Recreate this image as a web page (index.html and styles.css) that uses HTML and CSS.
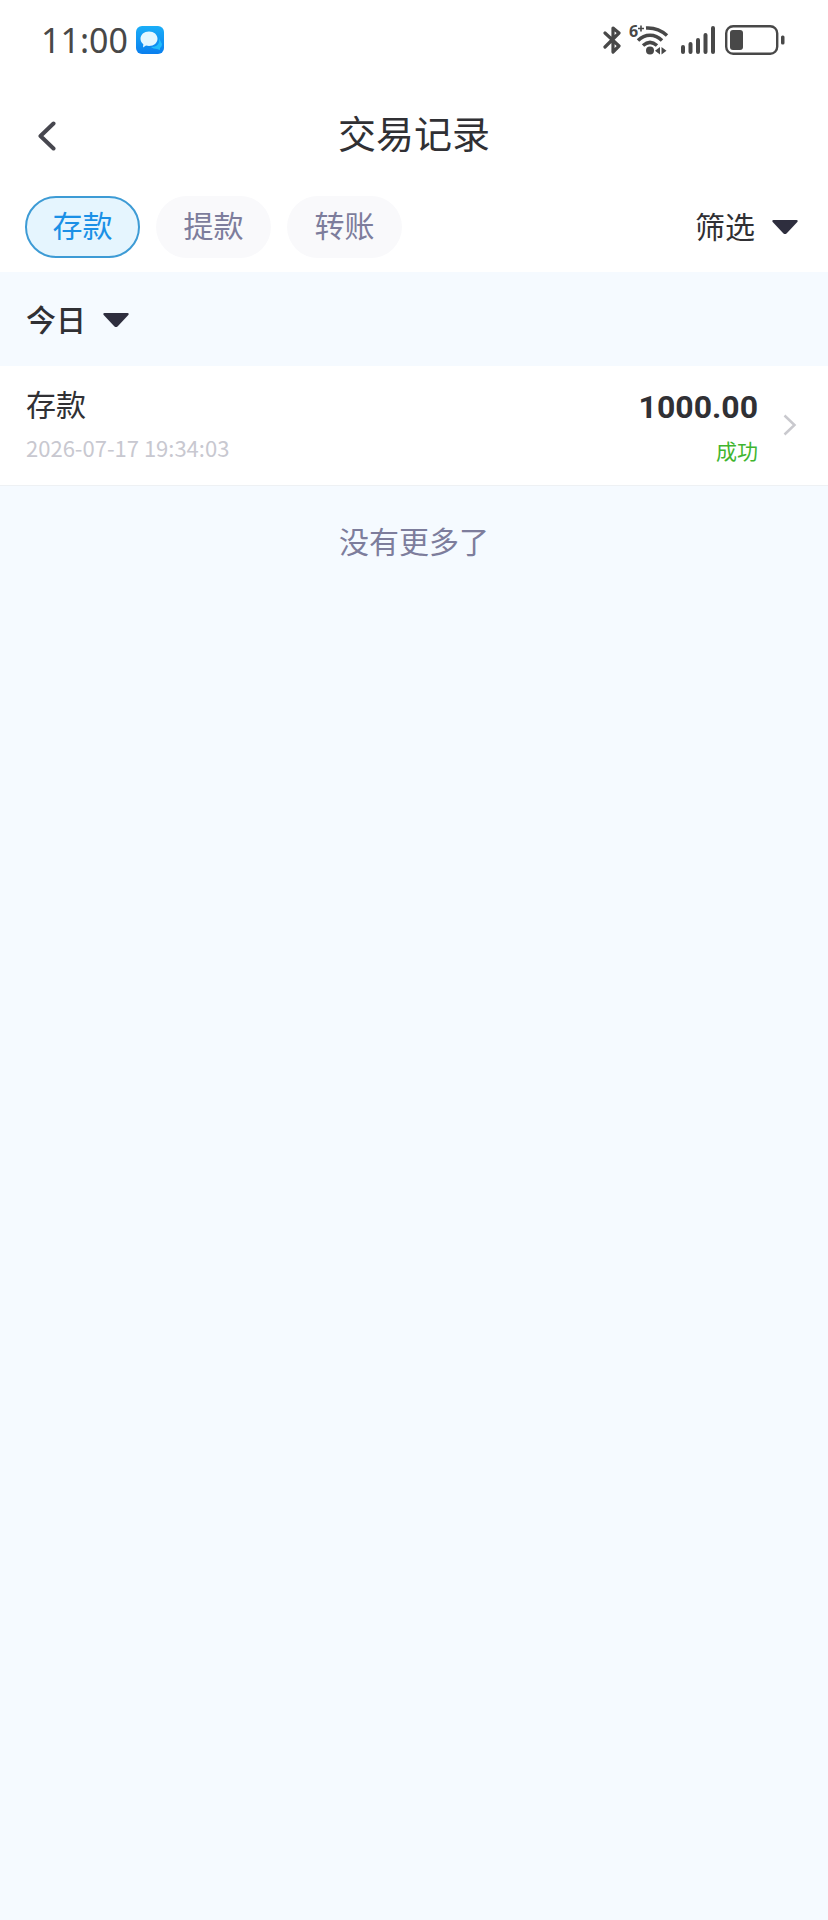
FILE: index.html
```html
<!DOCTYPE html>
<html lang="zh-CN">
<head>
    <meta charset="UTF-8">
    <meta name="viewport" content="width=device-width, initial-scale=1.0">
    <title>交易记录</title>
    <link rel="stylesheet" href="styles.css">
</head>
<body>
    <div class="top">
        <div class="status-bar">
            <span class="time">11:00</span>
            <svg class="app-icon" width="28" height="28" viewBox="0 0 28 28">
                <defs>
                    <linearGradient id="appBlue" x1="0" y1="0" x2="0" y2="1">
                        <stop offset="0" stop-color="#1aaef8"/>
                        <stop offset="1" stop-color="#0a7fee"/>
                    </linearGradient>
                </defs>
                <rect width="28" height="28" rx="6" fill="url(#appBlue)"/>
                <path d="M15 21c6 0 9-3 8-9l3 6c0 2-1 3-2 4v2l-3-1c-2 0-5-1-6-2z" fill="#22bdfb"/>
                <path d="M13 5.500c5 0 8.500 3.200 8.500 7.300s-3.500 7.200-8.500 7.200c-1 0-2-.1-3-.4L7 21.500l.3-3.300c-1.800-1.300-2.800-3.200-2.800-5.400C4.500 8.700 8 5.500 13 5.500z" fill="#e4f7ff"/>
            </svg>
            <div class="status-icons">
                <svg width="18" height="30" viewBox="0 0 18 30" fill="none" stroke="#484848" stroke-width="3.200" stroke-linecap="round" stroke-linejoin="round">
                    <path d="M2 8l14 13-6 6V3l6 5L2 22"/>
                </svg>
                <svg class="wifi" width="40" height="42" viewBox="0 -6 40 42">
                    <text class="wifi-label" x="0" y="12">6</text>
                    <path d="M9 3.500h6M12 .5v6" stroke="#484848" stroke-width="1.600"/>
                    <g fill="none" stroke="#484848" stroke-width="3.500">
                        <path d="M17 3c8-.5 15 2 21 7.500"/>
                        <path d="M9 15.500c7-7 17-7 24 0"/>
                        <path d="M14 20.500c4.500-4 9.500-4 14 0"/>
                    </g>
                    <circle cx="21" cy="25.500" r="4" fill="#484848"/>
                    <path d="M31 22v7.500L26 25.700zM32.500 22v7.500l5-3.800z" fill="#484848"/>
                </svg>
                <svg class="signal" width="34" height="28" viewBox="0 0 34 28" stroke="#484848" stroke-width="4" stroke-linecap="round">
                    <path d="M2 21v5M9.500 18v8M17 14v12M24.500 9v17M32 2v24"/>
                </svg>
                <svg class="battery" width="60" height="30" viewBox="0 0 60 30">
                    <rect x="1.200" y="1.200" width="51" height="27.600" rx="7" fill="none" stroke="#484848" stroke-width="2.400"/>
                    <rect x="5" y="5" width="13" height="20" rx="3" fill="#484848"/>
                    <rect x="56" y="10.500" width="3.500" height="9" rx="1.500" fill="#484848"/>
                </svg>
            </div>
        </div>

        <header class="header">
            <button class="back" aria-label="返回">
                <svg width="18" height="30" viewBox="0 0 18 30" fill="none" stroke="#47474f" stroke-width="4" stroke-linecap="round" stroke-linejoin="round">
                    <path d="M15.500 2.500L2.500 15l13 12.500"/>
                </svg>
            </button>
            <h1 class="title">交易记录</h1>
        </header>

        <nav class="tabs">
            <button class="tab active">存款</button>
            <button class="tab">提款</button>
            <button class="tab">转账</button>
            <button class="filter">
                <span class="label">筛选</span>
                <svg width="28" height="16" viewBox="0 0 28 16"><path d="M2.500 1h23q2 .3.800 2L15.500 14.500q-1.500 1.200-3 0L1.700 3Q.5 1.300 2.500 1z" fill="#2e2e3e"/></svg>
            </button>
        </nav>
    </div>

    <main>
        <button class="day">
            <span class="label">今日</span>
            <svg width="28" height="16" viewBox="0 0 28 16"><path d="M2.500 1h23q2 .3.800 2L15.500 14.500q-1.500 1.200-3 0L1.700 3Q.5 1.300 2.500 1z" fill="#2e2e3e"/></svg>
        </button>

        <a class="record" href="#">
            <div class="record-info">
                <div class="record-name">存款</div>
                <div class="record-date">2026-07-17 19:34:03</div>
            </div>
            <div class="record-result">
                <div class="amount">1000.00</div>
                <div class="state">成功</div>
            </div>
            <svg width="14" height="22" viewBox="0 0 14 22" fill="none" stroke="#c9c9ce" stroke-width="2.500">
                <path d="M1.500 1.500L11.500 11l-10 9.500"/>
            </svg>
        </a>

        <p class="no-more">没有更多了</p>
    </main>
</body>
</html>
```
FILE: styles.css
```css
* {
    box-sizing: border-box;
}

body {
    margin: 0;
    min-height: 100vh;
    background-color: #f5faff;
    color: #303034;
    font-family: "Noto Sans CJK SC", sans-serif;
    font-size: 30px;
}

button {
    padding: 0;
    border: none;
    background: none;
    color: inherit;
    font: inherit;
    cursor: pointer;
}

svg {
    display: block;
    flex-shrink: 0;
}

.top {
    background-color: white;
}

/* Status bar */
.status-bar {
    display: flex;
    align-items: center;
    height: 80px;
    padding: 0 43px 0 41px;
}

.time {
    color: #484848;
    font-family: "Noto Sans", sans-serif;
    font-size: 34px;
    line-height: 40px;
}

.app-icon {
    margin-left: 8px;
}

.status-icons {
    display: flex;
    align-items: center;
    margin-left: auto;
}

.wifi {
    margin-left: 8px;
}

.wifi-label {
    fill: #484848;
    font-family: "Noto Sans", sans-serif;
    font-size: 16px;
    font-weight: 700;
}

.signal {
    margin-left: 12px;
}

.battery {
    margin-left: 10px;
}

/* Page header */
.header {
    display: grid;
    grid-template-columns: 1fr auto 1fr;
    align-items: center;
    height: 108px;
    padding: 0 38px;
}

.back {
    justify-self: start;
    padding-top: 4px;
}

.title {
    margin: 0;
    padding-bottom: 4px;
    font-size: 38px;
    font-weight: 400;
    line-height: 56px;
}

/* Tabs */
.tabs {
    display: flex;
    align-items: center;
    gap: 16px;
    padding: 8px 29px 14px 25px;
}

.tab {
    width: 115px;
    height: 62px;
    padding-bottom: 6px;
    border: 2px solid transparent;
    border-radius: 31px;
    background-color: #f9f9fb;
    color: #7d7d9c;
    line-height: 44px;
}

.tab.active {
    border-color: #3d9bd5;
    background-color: #e5f5fe;
    color: #1a90e6;
}

.filter {
    display: flex;
    align-items: center;
    gap: 16px;
    margin-left: auto;
    line-height: 44px;
}

.label {
    padding-bottom: 4px;
}

/* Record list */
.day {
    display: flex;
    align-items: center;
    gap: 16px;
    width: 100%;
    height: 94px;
    padding: 2px 26px 0;
    font-weight: 500;
}

.record {
    display: flex;
    align-items: center;
    padding: 16px 31px 17px 26px;
    border-bottom: 1px solid #eef1f4;
    background-color: white;
    color: inherit;
    text-decoration: none;
}

.record-name {
    padding-bottom: 4px;
    line-height: 40px;
}

.record-date {
    color: #c8c8d0;
    font-size: 22px;
    line-height: 40px;
}

.record-result {
    margin: 0 25px 0 auto;
    text-align: right;
}

.amount {
    font-family: Roboto, sans-serif;
    font-size: 32px;
    font-weight: 700;
    line-height: 50px;
}

.state {
    color: #3fb52f;
    font-size: 21px;
    line-height: 36px;
}

.no-more {
    margin: 31px 0;
    color: #7d7d9c;
    line-height: 46px;
    text-align: center;
}
```
